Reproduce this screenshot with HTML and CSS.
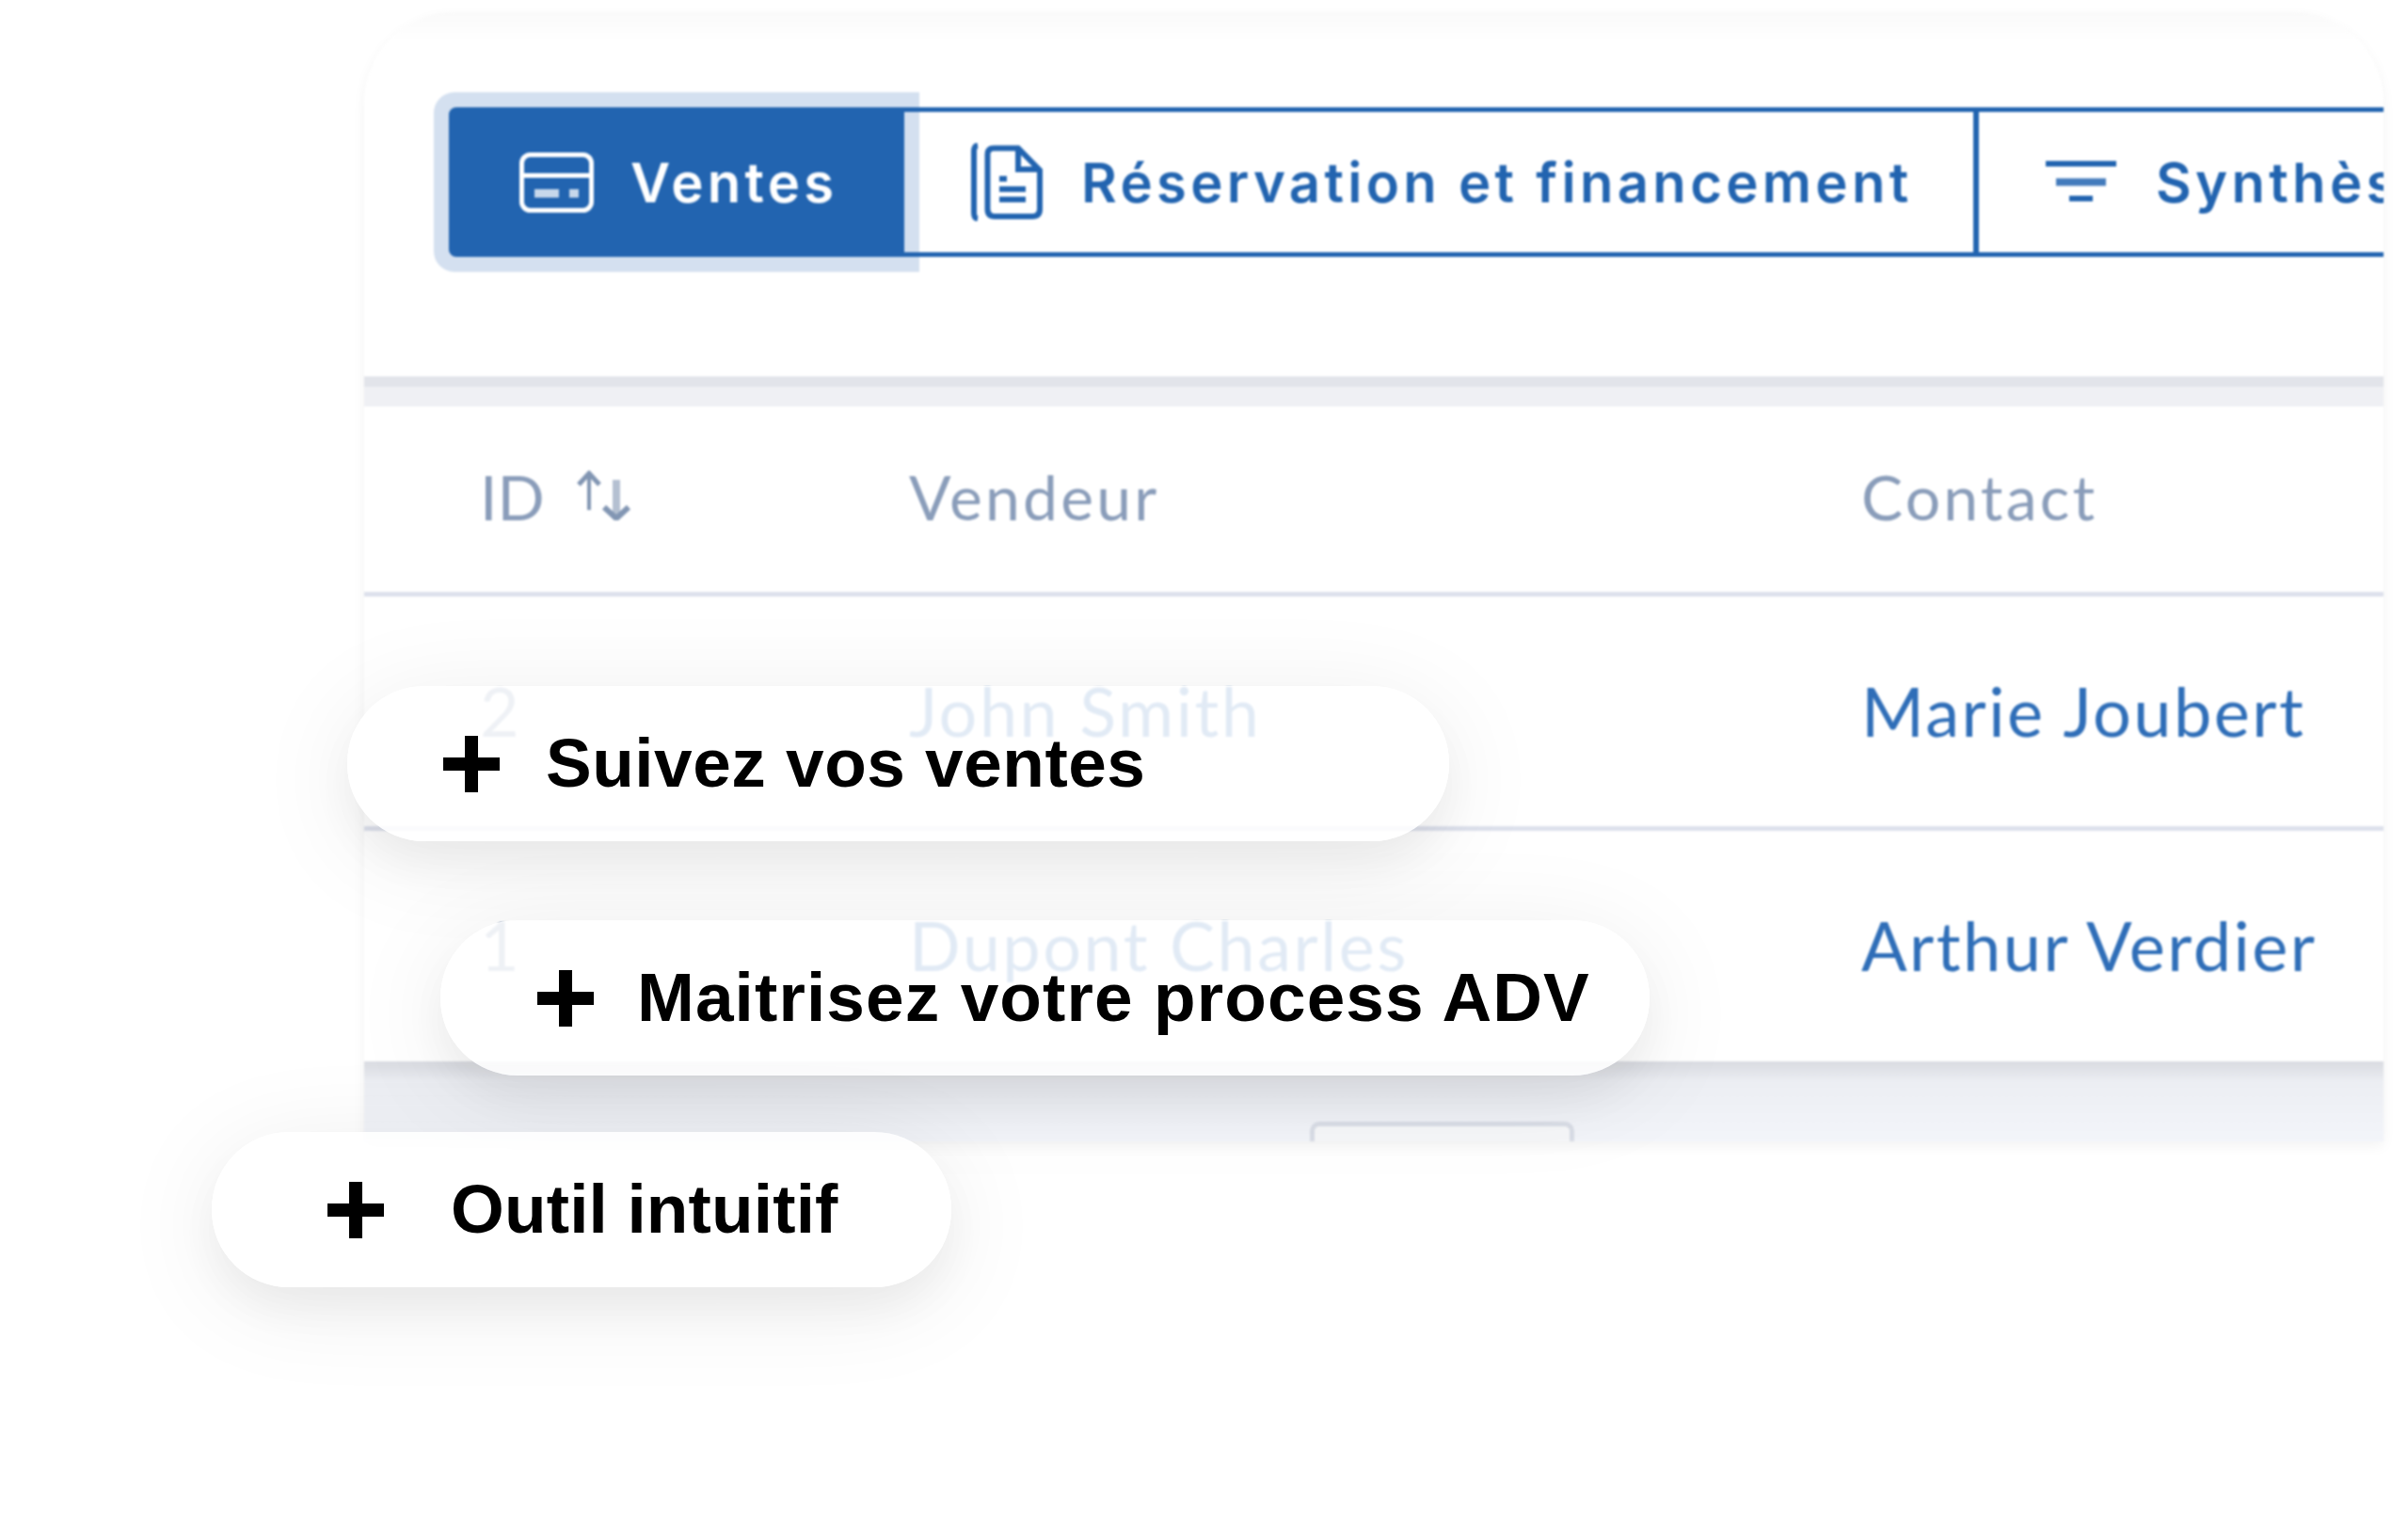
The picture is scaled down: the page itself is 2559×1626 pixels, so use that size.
FILE: index.html
```html
<!DOCTYPE html>
<html lang="fr">
<head>
    <meta charset="UTF-8">
    <title>Suivi des ventes</title>
    <link rel="stylesheet" href="styles.css">
</head>
<body>

    <section class="card">
        <div class="card-head">
            <nav class="tabs">
                <a class="tab tab-active">
                    <svg class="icon-card" viewBox="0 0 79 64" fill="none" stroke="#fff" stroke-width="5">
                        <rect x="2.5" y="2.5" width="74" height="59" rx="9"/>
                        <path d="M2.5 24.5H76.5"/>
                        <path d="M16 43.5H42M53 43.5H63" stroke-width="9" stroke-opacity=".75"/>
                    </svg>
                    <span>Ventes</span>
                </a>
                <a class="tab tab-split">
                    <svg class="icon-doc" viewBox="0 0 78 83" fill="none" stroke="#2264b0" stroke-width="6">
                        <path d="M9 2.5Q5 3 5 9V74Q5 80 9 80.5"/>
                        <path d="M26 5.500H52L75 29V70Q75 78 67 78H27Q19.500 78 19.500 70V12Q19.500 5.500 26 5.500Z"/>
                        <path d="M52 5.500V28H75"/>
                        <path d="M32 38H40M32 49H60M32 60H60" stroke-width="6"/>
                    </svg>
                    <span>Réservation et financement</span>
                </a>
                <a class="tab">
                    <svg class="icon-filter" viewBox="0 0 78 53" fill="none" stroke="#2264b0">
                        <path d="M2 7H77" stroke-width="6"/>
                        <path d="M13 26.500H66" stroke-width="8" stroke-opacity=".85"/>
                        <path d="M27 44H52" stroke-width="6"/>
                    </svg>
                    <span>Synthèse</span>
                </a>
            </nav>
        </div>

        <div class="band"></div>

        <div class="table">
            <div class="row row-head">
                <div class="cell cell-id">
                    ID
                    <svg class="icon-sort" viewBox="0 0 60 53" fill="none" stroke="#8296b3">
                        <path d="M13 2V42" stroke-width="4"/>
                        <path d="M2 15L13 3L24 15" stroke-width="5"/>
                        <path d="M42 10V50" stroke-width="8" stroke-opacity=".6"/>
                        <path d="M29 39L42 51L55 39" stroke-width="6"/>
                    </svg>
                </div>
                <div class="cell">Vendeur</div>
                <div class="cell">Contact</div>
            </div>
            <div class="row">
                <div class="cell cell-muted">2</div>
                <div class="cell">John Smith</div>
                <div class="cell">Marie Joubert</div>
            </div>
            <div class="row row-last">
                <div class="cell cell-muted">1</div>
                <div class="cell">Dupont Charles</div>
                <div class="cell">Arthur Verdier</div>
            </div>
        </div>

        <div class="table-foot">
            <div class="page-btn"></div>
        </div>
    </section>

    <div class="pill pill-sales">
        <svg class="plus" viewBox="0 0 60 60"><path d="M23 0H37V23H60V37H37V60H23V37H0V23H23Z"/></svg>
        <span>Suivez vos ventes</span>
    </div>
    <div class="pill pill-process">
        <svg class="plus" viewBox="0 0 60 60"><path d="M23 0H37V23H60V37H37V60H23V37H0V23H23Z"/></svg>
        <span>Maitrisez votre process ADV</span>
    </div>
    <div class="pill pill-tool">
        <svg class="plus" viewBox="0 0 60 60"><path d="M23 0H37V23H60V37H37V60H23V37H0V23H23Z"/></svg>
        <span>Outil intuitif</span>
    </div>

</body>
</html>
```

FILE: styles.css
```css
* {
    box-sizing: border-box;
    margin: 0;
    padding: 0;
}
body {
    position: relative;
    height: 1626px;
    overflow: hidden;
    background-color: #fff;
    font-family: "Lato", "Liberation Sans", sans-serif;
}

/* carte principale */
.card {
    display: flex;
    flex-direction: column;
    width: 2146px;
    height: 1200px;
    margin: 13px 0 0 387px;
    overflow: hidden;
    background: linear-gradient(#fafafa, #fff 30px);
    border-radius: 96px 96px 0 0;
    box-shadow: 0 5px 14px rgba(0, 0, 0, 0.05);
    filter: blur(0.9px);
}
.card-head {
    flex: none;
    height: 387px;
    padding: 101px 0 0 90px;
}

/* onglets */
.tabs {
    display: flex;
    height: 159px;
    color: #2264b0;
    font-family: "Inter", sans-serif;
    font-size: 58px;
    font-weight: 600;
    letter-spacing: 4.3px;
}
.tab {
    display: flex;
    flex: none;
    align-items: center;
    gap: 41px;
    padding-left: 69px;
    border-top: 5px solid #2264b0;
    border-bottom: 5px solid #2264b0;
    white-space: nowrap;
}
.tab-active {
    width: 484px;
    gap: 39px;
    padding-left: 75px;
    color: #fff;
    background-color: #2264b0;
    border-radius: 8px 0 0 8px;
    box-shadow: 0 0 0 16px #d4e0f0;
}
.tab-split {
    width: 1142px;
    border-right: 6px solid #2264b0;
}
.icon-card {
    width: 79px;
    height: 64px;
}
.icon-doc {
    width: 78px;
    height: 83px;
}
.icon-filter {
    width: 78px;
    height: 53px;
}

.band {
    flex: none;
    height: 32px;
    background: linear-gradient(#e2e4ea 11px, #eff0f4 11px);
}

/* tableau */
.row {
    display: grid;
    grid-template-columns: 456px 1012px 1fr;
    align-items: center;
    height: 249px;
    padding-left: 123px;
    color: #2f6eb8;
    font-size: 72px;
    font-weight: 400;
    letter-spacing: 2.5px;
    border-bottom: 5px solid #dde1ec;
}
.row-head {
    height: 202px;
    color: #8a9dba;
    font-size: 66px;
    letter-spacing: 3.2px;
}
.row-last {
    height: 245px;
    border-bottom: none;
}
.cell {
    padding-bottom: 3px;
    white-space: nowrap;
}
.row-head .cell {
    padding-bottom: 6px;
}
.cell-id {
    display: flex;
    align-items: center;
    gap: 34px;
    letter-spacing: 0;
}
.cell-muted {
    color: #8a9dba;
}
.icon-sort {
    width: 60px;
    height: 53px;
    margin-top: -3px;
}

.table-foot {
    display: flex;
    flex: 1;
    align-items: flex-end;
    padding-left: 1005px;
    background: linear-gradient(#d9dbe1, #eceef3 22px, #f3f5fa 85px);
}
.page-btn {
    width: 281px;
    height: 21px;
    background-color: #f6f7f9;
    border: 5px solid #d9dde6;
    border-bottom: none;
    border-radius: 10px 10px 0 0;
}

/* pastilles par-dessus la carte */
.pill {
    position: absolute;
    display: flex;
    align-items: center;
    height: 165px;
    background-color: rgba(255, 255, 255, 0.86);
    border-radius: 82px;
    box-shadow: 0 25px 40px rgba(0, 0, 0, 0.04), 0 17px 110px rgba(0, 0, 0, 0.08);
    color: #000;
    font-family: "Liberation Sans", Arial, sans-serif;
    font-size: 73px;
    font-weight: 700;
    white-space: nowrap;
}
.pill span {
    margin-top: -3px;
}
.plus {
    flex: none;
    width: 60px;
    height: 60px;
}
.pill-sales {
    top: 729px;
    left: 369px;
    width: 1171px;
    gap: 49px;
    padding-left: 102px;
    letter-spacing: 0.5px;
}
.pill-process {
    top: 978px;
    left: 468px;
    width: 1285px;
    gap: 46px;
    padding-left: 103px;
    letter-spacing: 1.1px;
}
.pill-tool {
    top: 1203px;
    left: 225px;
    width: 786px;
    gap: 71px;
    padding-left: 123px;
    letter-spacing: 0.15px;
}
```
